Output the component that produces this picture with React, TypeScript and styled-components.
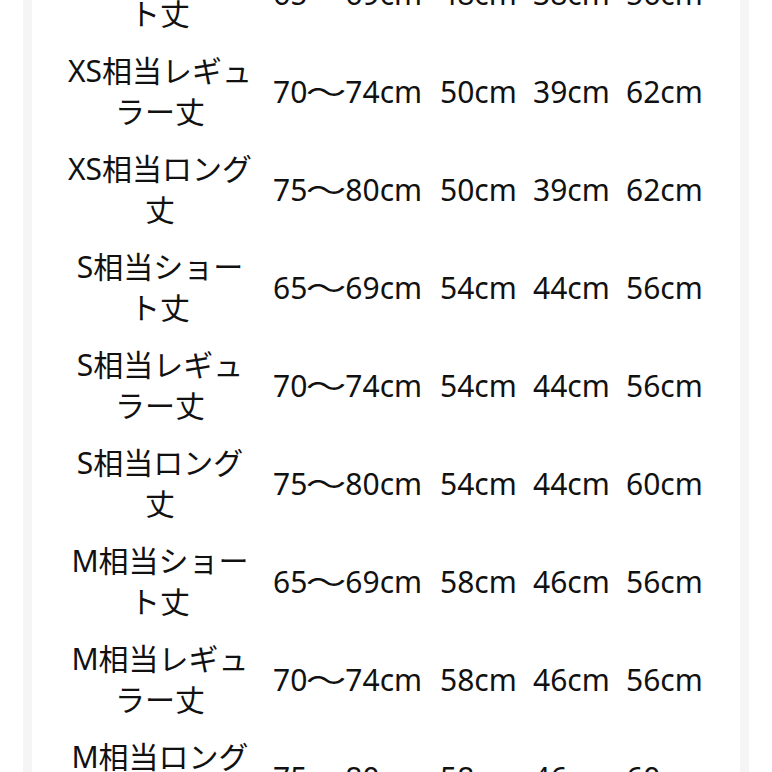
import styled, { createGlobalStyle } from "styled-components";

const GlobalStyle = createGlobalStyle`
  html, body {
    margin: 0;
    padding: 0;
    background: #ffffff;
    overflow: hidden;
  }
`;

const Page = styled.div`
  width: 772px;
  height: 772px;
  overflow: hidden;
  background: #ffffff;
`;

const Card = styled.div`
  margin: -56px 32px 0;
  background: #ffffff;
  box-shadow: 0 0 0 9px #f5f5f5;
  min-height: 900px;
  font-family: "Noto Sans", "Noto Sans CJK JP", sans-serif;
  font-size: 30px;
  color: #111111;
`;

const Row = styled.div`
  display: grid;
  grid-template-columns: 241px 167px 93px 93px 1fr;
  align-items: center;
  height: 98px;
`;

const Label = styled.div`
  padding: 0 13px 0 28px;
  text-align: center;
  line-height: 41px;
  white-space: nowrap;
`;

const Value = styled.div`
  line-height: 41px;
  white-space: nowrap;
`;

const Tilde = styled.span`
  display: inline-block;
  margin: 0 4px;
  transform: scaleX(1.35);
`;

interface SizeRow {
  label: string[];
  values: string[];
}

const rows: SizeRow[] = [
  { label: ["XS相当ショー", "ト丈"], values: ["65～69cm", "48cm", "38cm", "56cm"] },
  { label: ["XS相当レギュ", "ラー丈"], values: ["70～74cm", "50cm", "39cm", "62cm"] },
  { label: ["XS相当ロング", "丈"], values: ["75～80cm", "50cm", "39cm", "62cm"] },
  { label: ["S相当ショー", "ト丈"], values: ["65～69cm", "54cm", "44cm", "56cm"] },
  { label: ["S相当レギュ", "ラー丈"], values: ["70～74cm", "54cm", "44cm", "56cm"] },
  { label: ["S相当ロング", "丈"], values: ["75～80cm", "54cm", "44cm", "60cm"] },
  { label: ["M相当ショー", "ト丈"], values: ["65～69cm", "58cm", "46cm", "56cm"] },
  { label: ["M相当レギュ", "ラー丈"], values: ["70～74cm", "58cm", "46cm", "56cm"] },
  { label: ["M相当ロング", "丈"], values: ["75～80cm", "58cm", "46cm", "60cm"] },
];

// the length range has a wide full-width tilde in the reference
const renderValue = (value: string) => {
  const parts = value.split("～");
  if (parts.length < 2) return value;
  return (
    <>
      {parts[0]}
      <Tilde>～</Tilde>
      {parts[1]}
    </>
  );
};

const App = () => {
  return (
    <Page>
      <GlobalStyle />
      <Card>
        {rows.map((row, index) => (
          <Row key={index}>
            <Label>
              {row.label[0]}
              <br />
              {row.label[1]}
            </Label>
            {row.values.map((value, i) => (
              <Value key={i}>{renderValue(value)}</Value>
            ))}
          </Row>
        ))}
      </Card>
    </Page>
  );
};

export default App;
